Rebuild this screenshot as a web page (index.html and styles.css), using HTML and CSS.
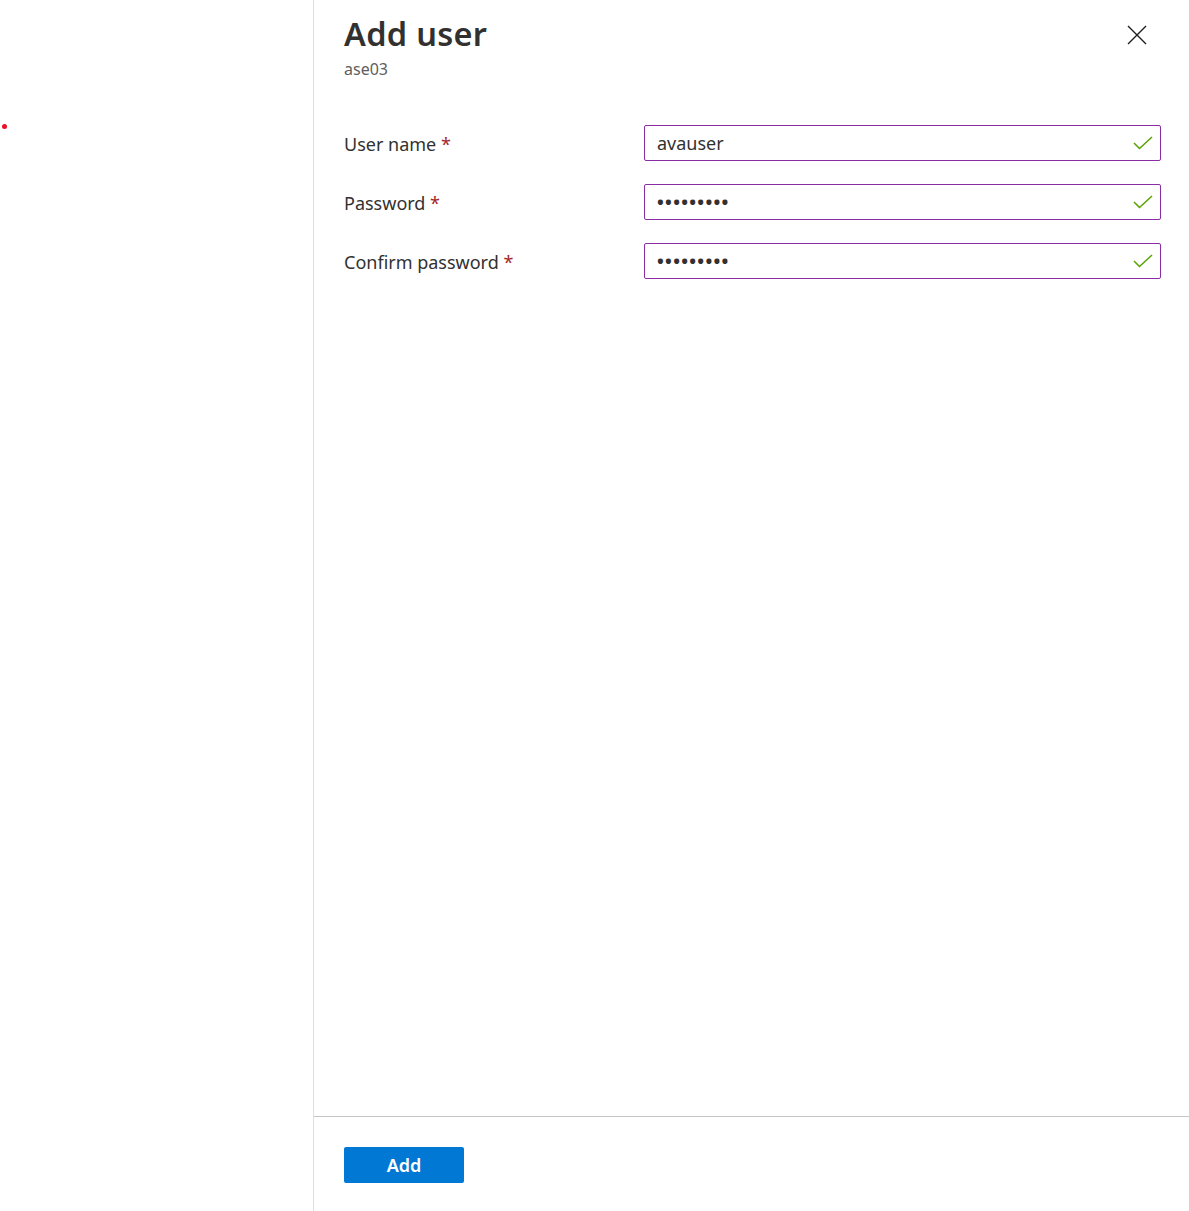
FILE: index.html
```html
<!DOCTYPE html>
<html lang="en">
<head>
<meta charset="utf-8">
<title>Add user</title>
<link rel="stylesheet" href="styles.css">
</head>
<body>
<div class="page">
  <div class="backdrop">
    <span class="dot"></span>
  </div>
  <div class="panel">
    <header class="panel-header">
      <div class="titles">
        <h1 class="title">Add user</h1>
        <div class="subtitle">ase03</div>
      </div>
      <button class="close" aria-label="Close">
        <svg width="20" height="20" viewBox="0 0 20 20"><path d="M1 1 L19 19 M19 1 L1 19" stroke="#201f1e" stroke-width="1.4" fill="none"/></svg>
      </button>
    </header>
    <form class="form">
      <div class="row">
        <label class="label">User name <span class="req">*</span></label>
        <div class="field">
          <span class="value">avauser</span>
          <svg class="check" width="20" height="14" viewBox="0 0 20 14"><path d="M1 7 L6.5 12.5 L19 1" stroke="#57a300" stroke-width="1.5" fill="none"/></svg>
        </div>
      </div>
      <div class="row">
        <label class="label">Password <span class="req">*</span></label>
        <div class="field">
          <span class="value dots">•••••••••</span>
          <svg class="check" width="20" height="14" viewBox="0 0 20 14"><path d="M1 7 L6.5 12.5 L19 1" stroke="#57a300" stroke-width="1.5" fill="none"/></svg>
        </div>
      </div>
      <div class="row">
        <label class="label">Confirm password <span class="req">*</span></label>
        <div class="field">
          <span class="value dots">•••••••••</span>
          <svg class="check" width="20" height="14" viewBox="0 0 20 14"><path d="M1 7 L6.5 12.5 L19 1" stroke="#57a300" stroke-width="1.5" fill="none"/></svg>
        </div>
      </div>
    </form>
    <footer class="footer">
      <button class="primary" type="button">Add</button>
    </footer>
  </div>
</div>
</body>
</html>
```
FILE: styles.css
```css
* { box-sizing: border-box; }
html, body { margin: 0; padding: 0; background: #fff; }
body {
  font-family: "Noto Sans", "Open Sans", sans-serif;
  color: #323130;
}
.page {
  display: flex;
  height: 1211px;
}
.backdrop {
  width: 314px;
  flex: none;
  border-right: 1px solid #e1dfdd;
  padding-top: 124px;
  padding-left: 2px;
}
.dot {
  display: block;
  width: 5px;
  height: 5px;
  border-radius: 50%;
  background: #e81123;
}
.panel {
  flex: 1;
  display: flex;
  flex-direction: column;
}
.panel-header {
  display: flex;
  justify-content: space-between;
  align-items: flex-start;
  padding: 10px 42px 0 30px;
}
.title {
  margin: 0;
  font-size: 32.5px;
  letter-spacing: 0.3px;
  line-height: 48px;
  font-weight: 600;
  color: #323130;
}
.subtitle {
  font-size: 16px;
  line-height: 20px;
  color: #605e5c;
  margin-top: 1px;
}
.close {
  background: none;
  border: 0;
  padding: 0;
  margin-top: 15px;
  width: 20px;
  height: 20px;
  cursor: pointer;
}
.close svg { display: block; }
.form {
  flex: 1;
  padding: 46px 28px 0 30px;
  display: flex;
  flex-direction: column;
  gap: 23px;
}
.row {
  display: grid;
  grid-template-columns: 300px 517px;
  align-items: center;
}
.label {
  font-size: 18px;
  color: #323130;
  height: 36px;
  line-height: 38px;
}
.req {
  color: #a4262c;
}
.field {
  height: 36px;
  border: 1px solid #8a2da5;
  border-radius: 2px;
  display: flex;
  align-items: center;
  justify-content: space-between;
  padding: 0 7px 0 12px;
}
.value {
  font-size: 18px;
  color: #323130;
}
.dots {
  font-size: 18px;
  letter-spacing: 1.3px;
  font-weight: 700;
}
.check { display: block; }
.footer {
  border-top: 1px solid #c8c6c4;
  padding: 30px 30px 28px;
}
.primary {
  width: 120px;
  height: 36px;
  background: #0078d4;
  color: #fff;
  border: 0;
  border-radius: 2px;
  font-family: "Noto Sans", "Open Sans", sans-serif;
  font-size: 18px;
  font-weight: 600;
  display: block;
}
```
